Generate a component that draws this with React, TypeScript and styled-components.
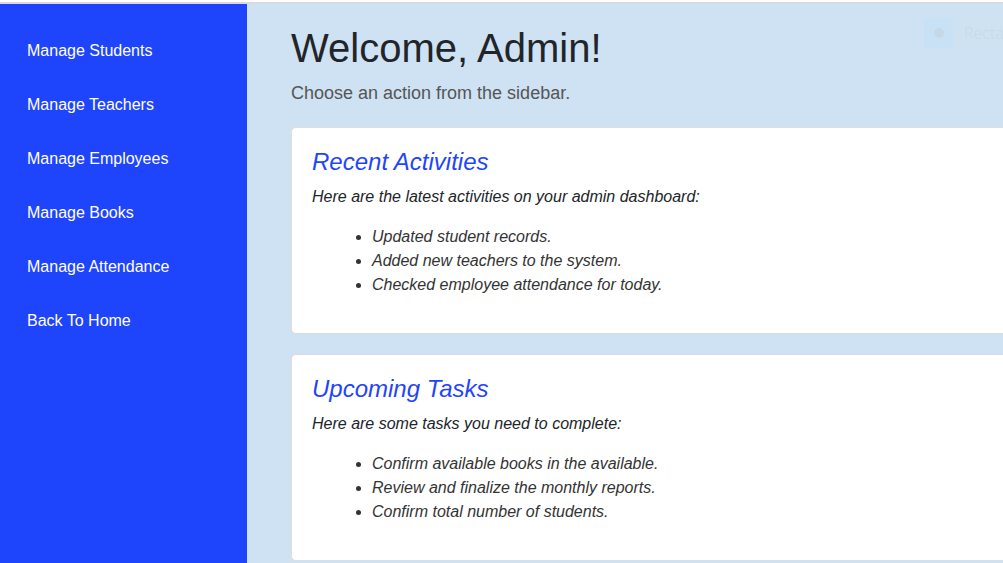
import React from "react";
import styled, { createGlobalStyle } from "styled-components";

const GlobalStyle = createGlobalStyle`
  *, *::before, *::after { box-sizing: border-box; }
  body {
    margin: 0;
    background: #cfe2f3;
    color: #212529;
    font-family: "Liberation Sans", Arial, sans-serif;
    font-size: 16px;
    line-height: 24px;
    overflow: hidden;
  }
`;

const Page = styled.div`
  display: flex;
  flex-direction: column;
  height: 100vh;
  border-top: 2px solid #ffffff;
`;

const Columns = styled.div`
  display: flex;
  flex: 1;
  min-height: 0;
  border-top: 2px solid #dadada;
`;

const Sidebar = styled.nav`
  flex: 0 0 247px;
  padding: 20px 12px;
  background: #1f45fc;
`;

const SidebarLink = styled.a`
  display: block;
  padding: 15px;
  color: #ffffff;
  text-decoration: none;
`;

const Main = styled.main`
  flex: 1;
  min-width: 0;
  padding: 20px 0 0 44px;
`;

const Title = styled.h1`
  margin: 0 0 8px;
  font-size: 40px;
  line-height: 48px;
  font-weight: 400;
`;

const Lead = styled.p`
  margin: 0 0 20px;
  color: #555555;
  font-size: 18px;
  line-height: 27px;
`;

const Card = styled.section`
  margin-bottom: 20px;
  padding: 20px;
  border: 1px solid #dddddd;
  border-right: 0;
  border-radius: 5px 0 0 5px;
  background: #ffffff;
  font-style: italic;
`;

const CardTitle = styled.h2`
  margin: 0 0 9px;
  color: #1f45fc;
  font-size: 24px;
  line-height: 28px;
  font-weight: 400;
`;

const CardText = styled.p`
  margin: 0 0 16px;
`;

const CardList = styled.ul`
  margin: 0 0 16px;
  padding-left: 60px;
  color: #333333;
`;

const Notice = styled.div`
  position: absolute;
  top: 18px;
  right: 0;
  display: flex;
  width: 79px;
  color: #c6d9e9;
  background: #cee2f2;
  font-family: "Open Sans", "Noto Sans", sans-serif;
  font-size: 16px;
  font-weight: 300;
  line-height: 30px;
  white-space: nowrap;
`;

const NoticeIcon = styled.span`
  display: flex;
  flex: 0 0 30px;
  align-items: center;
  justify-content: center;
  margin-right: 10px;
  background: #c9e1f4;
`;

const links = [
  "Manage Students",
  "Manage Teachers",
  "Manage Employees",
  "Manage Books",
  "Manage Attendance",
  "Back To Home",
];

const cards = [
  {
    title: "Recent Activities",
    text: "Here are the latest activities on your admin dashboard:",
    items: [
      "Updated student records.",
      "Added new teachers to the system.",
      "Checked employee attendance for today.",
    ],
  },
  {
    title: "Upcoming Tasks",
    text: "Here are some tasks you need to complete:",
    items: [
      "Confirm available books in the available.",
      "Review and finalize the monthly reports.",
      "Confirm total number of students.",
    ],
  },
];

export default function App() {
  return (
    <Page>
      <GlobalStyle />
      <Columns>
        <Sidebar aria-label="Admin">
          {links.map((label) => (
            <SidebarLink key={label} href="#">
              {label}
            </SidebarLink>
          ))}
        </Sidebar>
        <Main>
          <Title>Welcome, Admin!</Title>
          <Lead>Choose an action from the sidebar.</Lead>
          {cards.map((card) => (
            <Card key={card.title}>
              <CardTitle>{card.title}</CardTitle>
              <CardText>{card.text}</CardText>
              <CardList>
                {card.items.map((item) => (
                  <li key={item}>{item}</li>
                ))}
              </CardList>
            </Card>
          ))}
        </Main>
      </Columns>
      <Notice>
        <NoticeIcon>
          <svg width="10" height="10" viewBox="0 0 10 10" aria-hidden="true">
            <circle cx="5" cy="5" r="5" fill="#c5d8e8" />
          </svg>
        </NoticeIcon>
        Recta
      </Notice>
    </Page>
  );
}
